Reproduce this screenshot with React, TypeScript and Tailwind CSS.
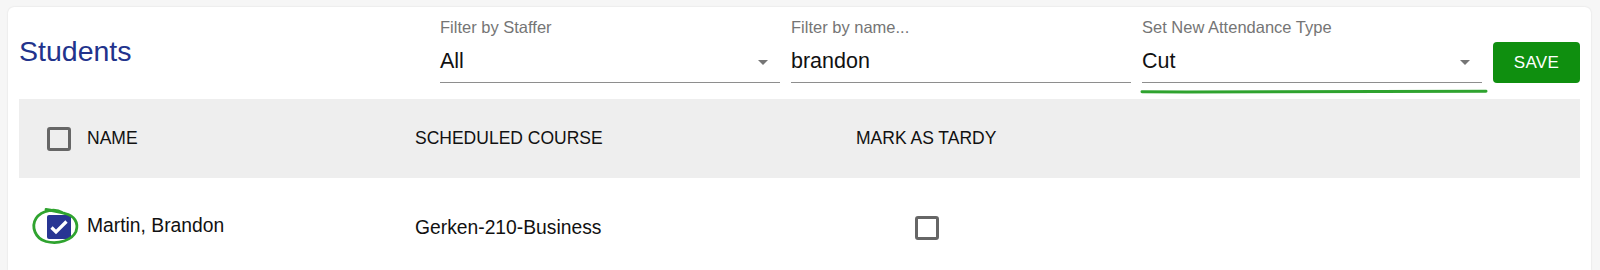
import React from "react";

const font = { fontFamily: '"Liberation Sans", Arial, sans-serif' };

function Caret() {
  return (
    <svg viewBox="0 0 10 5" className="absolute right-[12px] top-[23px] h-[5px] w-[10px]">
      <path d="M0 0h10L5 5z" fill="#757575" />
    </svg>
  );
}

interface FieldProps {
  label: string;
  value: string;
  select?: boolean;
  children?: React.ReactNode;
}

function Field({ label, value, select, children }: FieldProps) {
  return (
    <div className="relative w-[340px]">
      <div className="h-[20px] text-[16.5px] leading-[20px] text-[#757575]">{label}</div>
      <div className="relative border-b border-[#8e8e8e] pb-[8px] pt-[11px] text-[21.5px] leading-[26px] text-[#111]">
        {value}
        {select && <Caret />}
      </div>
      {children}
    </div>
  );
}

function EmptyBox() {
  return <span className="block h-[24px] w-[24px] rounded-[3px] border-[3px] border-[#666]" />;
}

function CheckedBox() {
  return (
    <span className="relative block h-[24px] w-[24px]">
      <span className="flex h-[24px] w-[24px] items-center justify-center rounded-[2px] bg-[#283593]">
        <svg viewBox="0 0 24 24" className="h-[24px] w-[24px]">
          <path d="M4.5 12.5l4.5 4.5L19.5 6.5" fill="none" stroke="#fff" strokeWidth="3.2" />
        </svg>
      </span>
      <svg
        viewBox="0 0 48 38"
        className="pointer-events-none absolute left-[-15px] top-[-8px] h-[39px] w-[48px] overflow-visible"
      >
        <path
          d="M30 5 C24 1, 10 2, 4 11 C-1 19, 3 31, 14 34 C26 37, 40 33, 44 24 C47 15, 42 8, 33 6 C27 5, 21 3, 14 2"
          fill="none"
          stroke="#2fa32f"
          strokeWidth="2.8"
          strokeLinecap="round"
        />
      </svg>
    </span>
  );
}

export default function App() {
  return (
    <div className="min-h-[270px] bg-[#f6f6f6] pl-[8px] pr-[9px] pt-[7px]" style={font}>
      <div className="rounded-[6px] bg-white px-[11px] shadow-[0_0_2px_rgba(0,0,0,0.12)]">
        <div className="flex items-end gap-[11px] pb-[16px] pt-[10px]">
          <h1 className="mb-[15px] mr-auto text-[28.5px] font-normal leading-[34px] text-[#22338c]">
            Students
          </h1>
          <Field label="Filter by Staffer" value="All" select />
          <Field label="Filter by name..." value="brandon" />
          <Field label="Set New Attendance Type" value="Cut" select>
            <svg viewBox="0 0 348 5" className="absolute left-[-2px] top-[72px] h-[5px] w-[348px]">
              <path d="M2 2.8 C120 3.2, 240 3, 346 2.2" fill="none" stroke="#2fa32f" strokeWidth="3" strokeLinecap="round" />
            </svg>
          </Field>
          <button className="h-[41px] w-[87px] rounded-[4px] bg-[#0f8f0f] text-[17px] tracking-[0.4px] text-white">
            SAVE
          </button>
        </div>

        <div className="grid h-[79px] grid-cols-[396px_441px_1fr] items-center bg-[#eeeeee] text-[17.5px] text-[#111]">
          <div className="flex items-center gap-[16px] pl-[28px]">
            <EmptyBox />
            <span>NAME</span>
          </div>
          <div>SCHEDULED COURSE</div>
          <div>MARK AS TARDY</div>
        </div>

        <div className="grid h-[98px] grid-cols-[396px_441px_1fr] items-center text-[19.3px] text-[#111]">
          <div className="flex items-center gap-[16px] pl-[28px]">
            <CheckedBox />
            <span className="-mt-[1px]">Martin, Brandon</span>
          </div>
          <div className="mt-[3px]">Gerken-210-Business</div>
          <div className="mt-[1px] flex w-[142px] justify-center">
            <EmptyBox />
          </div>
        </div>
      </div>
    </div>
  );
}
